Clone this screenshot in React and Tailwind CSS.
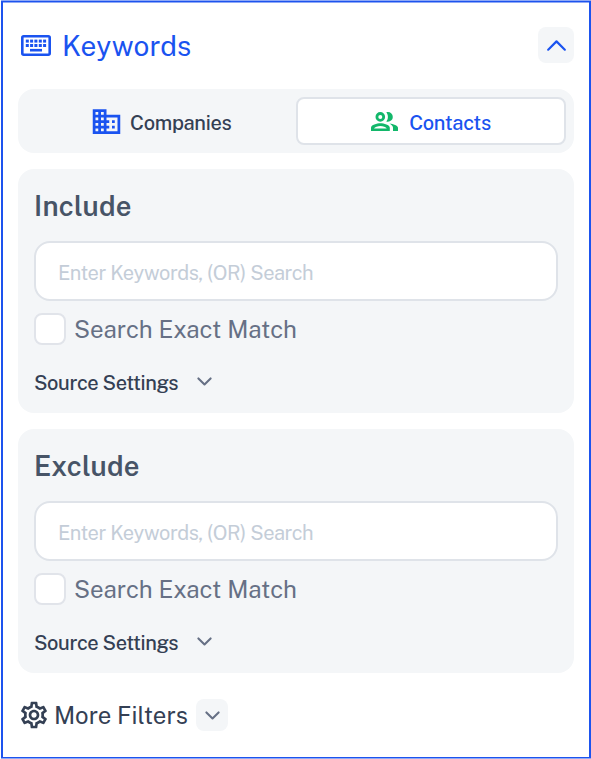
import React from 'react';
import { MdOutlineDomain, MdOutlineSettings } from 'react-icons/md';

const KEY_COLUMNS = [4.8, 9.1, 13.4, 17.8, 22.1];
const KEY_ROWS = [4.6, 9];

const KeyboardIcon = () => (
  <svg width="30" height="21" viewBox="0 0 30 21" className="shrink-0">
    <rect x="1.3" y="1.3" width="27.4" height="18.4" rx="1.4" fill="none" stroke="currentColor" strokeWidth="2.6" />
    {KEY_ROWS.map((y) =>
      KEY_COLUMNS.map((x) => (
        <rect key={`${x}-${y}`} x={x} y={y} width="3" height="3" fill="currentColor" />
      ))
    )}
    <rect x="9" y="13.9" width="12" height="2.6" fill="currentColor" />
  </svg>
);

const PeopleIcon = ({ className }) => (
  <svg width="27" height="19" viewBox="0 0 27 19" className={className} fill="currentColor">
    <circle cx="9.3" cy="4.9" r="3.4" fill="none" stroke="currentColor" strokeWidth="2.8" />
    <path d="M15.3.3c.5-.2 1-.3 1.6-.3a4.9 4.9 0 0 1 0 9.8c-.6 0-1.1-.1-1.6-.3 1-1.3 1.6-2.9 1.6-4.6s-.6-3.3-1.6-4.6z" />
    <path
      fillRule="evenodd"
      d="M0 19v-3.2c0-3 6-4.6 9.4-4.6s9.4 1.6 9.4 4.6V19zM3 16.4h12.8c-.8-1.2-3.8-2.4-6.4-2.4s-5.6 1.2-6.4 2.4z"
    />
    <path d="M18.5 11.4c3.6.5 8.5 2 8.5 4.4V19h-5v-3.2c0-1.8-1.6-3.3-3.5-4.4z" />
  </svg>
);

const Chevron = ({ up = false, className }) => (
  <svg viewBox="0 0 16 10" className={className} fill="none" stroke="currentColor">
    <path d={up ? 'M1 9 8 2l7 7' : 'M1.5 1.5 8 8l6.5-6.5'} strokeWidth={up ? 1.8 : 2.2} strokeLinecap="round" strokeLinejoin="round" />
  </svg>
);

const KeywordPanel = ({ title }) => (
  <section className="h-[244px] rounded-[16px] bg-[#f4f6f8] px-4 pt-5">
    <h2 className="h-8 whitespace-nowrap pt-px text-[27.5px] font-semibold leading-8 tracking-[0.25px] text-[#475467]">{title}</h2>
    <input
      type="text"
      placeholder="Enter Keywords, (OR) Search"
      className="mt-5 block h-[60px] w-full rounded-[16px] border-2 border-[#dfe3e9] bg-white px-[22px] pt-[3px] text-[20px] tracking-[-0.43px] text-[#344054] outline-none placeholder:text-[#c4cdd8]"
    />
    <label className="mt-3 flex h-8 items-center gap-2">
      <input type="checkbox" className="size-8 shrink-0 appearance-none rounded-[8px] border-2 border-[#e1e4ea] bg-white" />
      <span className="whitespace-nowrap text-[24px] leading-8 text-[#667085]">Search Exact Match</span>
    </label>
    <button type="button" className="mt-5 flex h-8 items-center gap-[19px] text-[#344054]">
      <span className="whitespace-nowrap pt-[3px] text-[20px] font-medium tracking-[-0.38px]">Source Settings</span>
      <Chevron className="w-[15px] text-[#667085]" />
    </button>
  </section>
);

export default function App() {
  return (
    <div className="h-[759px] w-[591px] bg-white pl-px font-['Public_Sans',Inter,sans-serif]">
      <div className="h-full border-y border-[#8fa9f6]">
        <div className="h-full border-x-2 border-y border-[#1d53ee]">
          <main className="h-full border-t border-[#8fa9f6] px-[15px]">
            <header className="flex h-[86.4px] items-center justify-between pb-[2px]">
              <div className="flex items-center gap-[11px] pl-[3px] text-[#1a53f0]">
                <KeyboardIcon />
                <h1 className="whitespace-nowrap pt-[2px] text-[28px] leading-8 tracking-[0.15px]">Keywords</h1>
              </div>
              <button type="button" className="flex size-9 items-center justify-center rounded-[8px] bg-[#f4f6f8]">
                <Chevron up className="w-[19px] text-[#1a53f0]" />
              </button>
            </header>

            <div className="flex h-16 rounded-[16px] bg-[#f4f6f8] p-2 text-[20px] font-medium tracking-[-0.3px]">
              <button type="button" className="flex flex-1 items-center justify-center gap-[7.5px] pr-px text-[#344054]">
                <MdOutlineDomain className="size-[33px] text-[#1a53f0]" />
                <span className="pt-[3px]">Companies</span>
              </button>
              <button
                type="button"
                className="flex w-[270px] items-center justify-center gap-[11px] rounded-[8px] border-2 border-[#dfe3e9] bg-white text-[#1a53f0]"
              >
                <PeopleIcon className="text-[#12b76a]" />
                <span className="pt-[3px]">Contacts</span>
              </button>
            </div>

            <div className="mt-4 flex flex-col gap-4">
              <KeywordPanel title="Include" />
              <KeywordPanel title="Exclude" />
            </div>

            <footer className="mt-[25.6px] flex h-8 items-center text-[#344054]">
              <MdOutlineSettings className="size-8" />
              <span className="ml-1 whitespace-nowrap text-[24px] leading-8">More Filters</span>
              <button type="button" className="ml-2 flex size-8 items-center justify-center rounded-[8px] bg-[#f4f6f8] pl-px pt-px">
                <Chevron className="w-[15px] text-[#667085]" />
              </button>
            </footer>
          </main>
        </div>
      </div>
    </div>
  );
}
